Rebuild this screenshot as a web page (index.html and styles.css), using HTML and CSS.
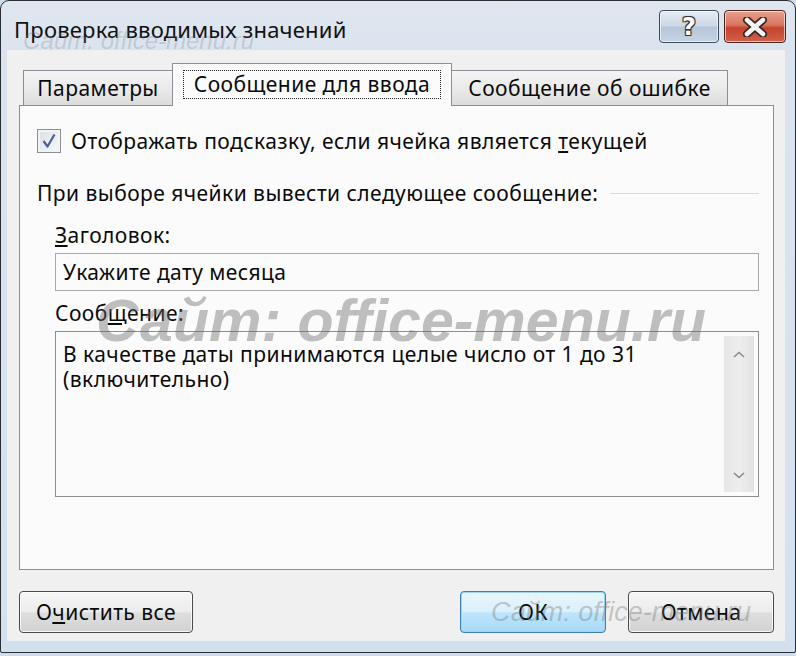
FILE: index.html
```html
<!DOCTYPE html>
<html lang="ru">
<head>
<meta charset="utf-8">
<title>Проверка вводимых значений</title>
<link rel="stylesheet" href="styles.css">
</head>
<body>
<div class="window">
  <div class="titlebar">
    <div class="title">Проверка вводимых значений</div>
    <div class="capbtn help"><span class="qmark">?</span></div>
    <div class="capbtn close">
      <svg width="30" height="20" viewBox="0 0 30 20">
        <path d="M7 3 L23 17 M23 3 L7 17" stroke="#3a2a28" stroke-width="8" stroke-linecap="round" fill="none"/>
        <path d="M7 3 L23 17 M23 3 L7 17" stroke="#f4f4f4" stroke-width="4.5" stroke-linecap="round" fill="none"/>
      </svg>
    </div>
  </div>
  <div class="client">
    <div class="tabs">
      <div class="tab tab-first">Параметры</div>
      <div class="tab active"><span class="focus">Сообщение для ввода</span></div>
      <div class="tab tab-last">Сообщение об ошибке</div>
    </div>
    <div class="panel">
      <div class="check-row">
        <span class="checkbox">
          <svg width="18" height="18" viewBox="0 0 18 18">
            <path d="M3.5 9 L7.5 14.5 L14.5 2.5" stroke="#4b5f9a" stroke-width="2.2" fill="none" stroke-linejoin="round"/>
          </svg>
        </span>
        <span class="label">Отображать подсказку, если ячейка является <u>т</u>екущей</span>
      </div>
      <div class="section">
        <span>При выборе ячейки вывести следующее сообщение:</span>
        <span class="rule"></span>
      </div>
      <div class="group">
        <div class="field-label"><u>З</u>аголовок:</div>
        <div class="input">Укажите дату месяца</div>
        <div class="field-label msg-label">Сооб<u>щ</u>ение:</div>
        <div class="textarea">
          <div class="ta-text">В качестве даты принимаются целые число от 1 до 31<br>(включительно)</div>
          <div class="scrollbar">
            <svg width="14" height="10" viewBox="0 0 14 10"><path d="M2 7 L7 2.5 L12 7" stroke="#8a8a8a" stroke-width="1.6" fill="none"/></svg>
            <svg width="14" height="10" viewBox="0 0 14 10"><path d="M2 3 L7 7.5 L12 3" stroke="#8a8a8a" stroke-width="1.6" fill="none"/></svg>
          </div>
        </div>
      </div>
    </div>
    <div class="buttons">
      <div class="btn btn-clear">О<u>ч</u>истить все</div>
      <div class="spacer"></div>
      <div class="btn btn-ok">ОК</div>
      <div class="btn btn-cancel">Отмена</div>
    </div>
  </div>
  <div class="wm wm-title">Сайт: office-menu.ru</div>
  <div class="wm wm-big">Сайт: office-menu.ru</div>
  <div class="wm wm-bottom">Сайт: office-menu.ru</div>
</div>
</body>
</html>
```
FILE: styles.css
```css
*, *::before, *::after {
  box-sizing: border-box;
}
html, body {
  margin: 0;
  padding: 0;
  background: #cfdceb;
}
body {
  font-family: "Noto Sans", "Open Sans", "DejaVu Sans", sans-serif;
  color: #0a0a0a;
}
.window {
  position: relative;
  width: 796px;
  height: 653px;
  border: 1px solid #2a2d33;
  border-radius: 9px 9px 2px 2px;
  background: linear-gradient(#dfe6ee 0px, #dbe4ee 50px, #d3e1ef 100%);
  display: flex;
  flex-direction: column;
  overflow: hidden;
}
.titlebar {
  flex: none;
  height: 49px;
  display: flex;
  align-items: flex-start;
  padding: 0 9px 0 13px;
}
.title {
  flex: 1;
  font-size: 22px;
  line-height: 22px;
  letter-spacing: 0.2px;
  margin-top: 17px;
  color: #111;
}
.capbtn {
  margin-top: 9px;
  height: 33px;
  border: 1px solid #3f4a5a;
  border-radius: 4px;
  display: flex;
  align-items: center;
  justify-content: center;
  box-shadow: inset 0 0 0 1px rgba(255,255,255,0.6);
}
.help {
  width: 60px;
  background: linear-gradient(#e6edf5 0%, #ccd8e6 48%, #b5c6d8 52%, #c6d5e5 100%);
}
.qmark {
  font-family: "DejaVu Sans", sans-serif;
  font-weight: 700;
  font-size: 24px;
  line-height: 24px;
  color: #fff;
  text-shadow: -1px -1px 0 #333, 1px -1px 0 #333, -1px 1px 0 #333, 1px 1px 0 #333, 0 0 2px #333;
}
.close {
  width: 62px;
  margin-left: 5px;
  border-color: #4a2520;
  background: linear-gradient(#e7a08f 0%, #d97660 45%, #c4432c 55%, #d3614a 100%);
}
.client {
  flex: 1;
  margin: 0 10px 11px 6px;
  background: #f0f0f0;
  padding: 13px 11px 0 12px;
  display: flex;
  flex-direction: column;
}
.tabs {
  flex: none;
  display: flex;
  align-items: flex-end;
  padding-left: 4px;
  height: 42px;
}
.tab {
  height: 35px;
  line-height: 34px;
  font-size: 21px;
  letter-spacing: 0.45px;
  text-align: center;
  border: 1px solid #8b8e96;
  border-bottom: none;
  background: linear-gradient(#f4f4f4 0%, #ebebeb 50%, #dcdcdc 100%);
  white-space: nowrap;
}
.tab-first {
  width: 149px;
  border-right: none;
}
.tab-last {
  width: 276px;
  border-left: none;
}
.tab.active {
  width: 280px;
  height: 43px;
  line-height: 40px;
  background: #fbfbfb;
  margin-bottom: -1px;
  position: relative;
  z-index: 1;
}
.focus {
  display: inline-block;
  line-height: 27px;
  width: 258px;
  border: 1px dotted #222;
}
.panel {
  flex: none;
  height: 465px;
  border: 1px solid #8b8e96;
  background: #fbfbfb;
  padding: 23px 14px 0 17px;
  font-size: 21px;
  letter-spacing: 0.45px;
}
.check-row {
  display: flex;
  align-items: center;
  height: 24px;
}
.checkbox {
  flex: none;
  width: 24px;
  height: 24px;
  border: 1px solid #8d8f92;
  background: linear-gradient(135deg, #dcdfe4, #f8f8fa);
  box-shadow: inset 0 0 0 2px #f2f3f5;
  display: flex;
  align-items: center;
  justify-content: center;
  margin-right: 10px;
}
.section {
  display: flex;
  align-items: center;
  margin-top: 27px;
  height: 26px;
}
.rule {
  flex: 1;
  height: 1px;
  background: #d5dbe0;
  margin-left: 12px;
}
.group {
  padding-left: 18px;
}
.field-label {
  margin-top: 16px;
  height: 26px;
  line-height: 26px;
}
.msg-label {
  margin-top: 9px;
}
.input {
  margin-top: 5px;
  height: 38px;
  line-height: 36px;
  border: 1px solid #a9a9a9;
  background: #fbfbfb;
  padding-left: 7px;
}
.textarea {
  margin-top: 5px;
  height: 166px;
  border: 1px solid #8e8e8e;
  background: #fbfbfb;
  display: flex;
  padding: 4px 4px 4px 7px;
}
.ta-text {
  flex: 1;
  line-height: 25px;
  padding-top: 6px;
}
.scrollbar {
  width: 30px;
  background: linear-gradient(90deg, #e6e6e6, #eeeeee 50%, #e2e2e2);
  display: flex;
  flex-direction: column;
  justify-content: space-between;
  align-items: center;
  padding: 14px 0 12px;
}
.buttons {
  flex: none;
  display: flex;
  margin-top: 21px;
}
.spacer {
  flex: 1;
}
.btn {
  height: 42px;
  line-height: 40px;
  border: 1px solid #4a4a4a;
  border-radius: 4px;
  background: linear-gradient(#f6f6f6 0%, #ececec 50%, #dedede 52%, #d2d2d2 100%);
  box-shadow: inset 0 0 0 1px rgba(255,255,255,0.8);
  font-size: 21px;
  letter-spacing: 0.45px;
  text-align: center;
}
.btn-clear {
  width: 174px;
}
.btn-ok {
  width: 146px;
  border-color: #3c7fb1;
  box-shadow: inset 0 0 0 1px #9fd5f2;
  background: linear-gradient(#eaf6fd 0%, #d9f0fc 50%, #bee6fd 52%, #a7d9f5 100%);
}
.btn-cancel {
  width: 146px;
  margin-left: 22px;
}
.wm {
  position: absolute;
  font-family: "Liberation Sans", sans-serif;
  font-style: italic;
  white-space: nowrap;
  pointer-events: none;
}
.wm-big {
  left: 95px;
  top: 286px;
  font-size: 59px;
  font-weight: 700;
  color: rgba(105, 105, 105, 0.42);
}
.wm-title {
  left: 22px;
  top: 26px;
  font-size: 24px;
  color: rgba(110, 120, 130, 0.25);
}
.wm-bottom {
  left: 490px;
  top: 596px;
  font-size: 27px;
  color: rgba(110, 110, 110, 0.35);
}
```
